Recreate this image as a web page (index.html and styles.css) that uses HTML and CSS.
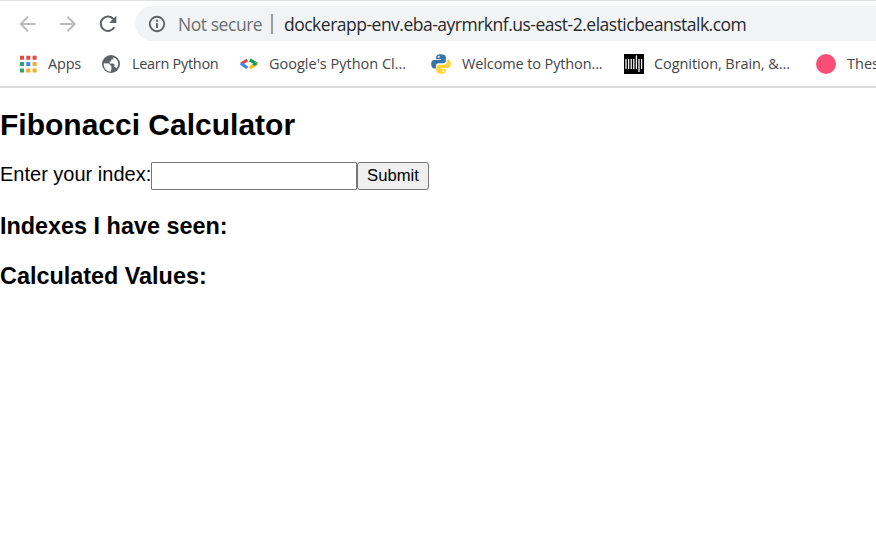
FILE: index.html
```html
<!DOCTYPE html>
<html lang="en">
<head>
<meta charset="utf-8">
<title>Fibonacci Calculator</title>
<link rel="stylesheet" href="styles.css">
</head>
<body>
<header class="browser">
  <div class="toolbar">
    <svg class="nav-icon" viewBox="0 0 20 20"><path class="arrow" d="M17.5 10H3M10 2.8L2.8 10L10 17.2"/></svg>
    <svg class="nav-icon" viewBox="0 0 20 20"><path class="arrow" d="M2 10H16.5M9.5 2.8L16.7 10L9.5 17.2"/></svg>
    <svg class="nav-icon" viewBox="0 0 20 20"><path class="reload" d="M16.3 13.2A7.2 7.2 0 1 1 15.6 5.2"/><path class="reload-tip" d="M18.3 1.8V9H11.1Z"/></svg>
    <div class="address">
      <svg class="info" viewBox="0 0 18 18"><circle cx="9" cy="9" r="7.2"/><path d="M9 8v5M9 4.8v2"/></svg>
      <span class="security">Not secure</span>
      <span class="divider"></span>
      <span class="url">dockerapp-env.eba-ayrmrknf.us-east-2.elasticbeanstalk.com</span>
    </div>
  </div>
  <nav class="bookmarks">
    <a class="bookmark apps">
      <svg viewBox="0 0 20 20"><g fill="#e34a45"><path d="M2 1.8h4v4H2zM8.3 1.8h4v4h-4zM14.6 1.8h4v4h-4z"/></g><path fill="#34a26a" d="M2 8.1h4v4H2zM2 14.4h4v4H2z"/><path fill="#3688ef" d="M8.3 8.1h4v4h-4z"/><path fill="#f4ab27" d="M14.6 8.1h4v4h-4zM8.3 14.4h4v4h-4zM14.6 14.4h4v4h-4z"/></svg>
      <span>Apps</span>
    </a>
    <a class="bookmark learn">
      <svg viewBox="0 0 20 20"><circle cx="10" cy="10" r="9" fill="#5f6368"/><path fill="#fff" d="M2.8 9.2L7.8 9.4L10.4 12.2V14L10 17.6C5.6 17.8 2.2 14 2.8 9.2zM12.2 3.2c3.2 1.2 4.9 3.3 5 6.5-.2 2-.8 3.5-1.8 4.7-.4-1-1-1.4-2-1.5v-2.5l-1-1H8.6V7.5h1.6V5.6h2z"/></svg>
      <span>Learn Python</span>
    </a>
    <a class="bookmark google">
      <svg viewBox="0 0 20 20"><g fill="none" stroke-width="3.2"><path stroke="#e34335" d="M8.3 6L2 10"/><path stroke="#4285f4" d="M1.8 9.2L8.3 14"/><path stroke="#169b58" d="M10.8 6L18 10"/><path stroke="#fbbc05" d="M17.8 9.4L10.8 14"/></g><path fill="#169b58" d="M14.8 8l3.8 2-3.2 2-2-1.5z"/></svg>
      <span>Google's Python Cl...</span>
    </a>
    <a class="bookmark welcome">
      <svg viewBox="0 0 20 20"><path fill="#3774a8" d="M9.8.2C6.3.2 5.2 1.4 5.2 3v2.2h5v.8H3.1C1 6 .2 7.8.2 10.1s.9 4.3 2.7 4.3h2V12c0-1.8 1.3-2.8 3-2.8h4.4c1.5 0 2.5-1 2.5-2.5V3c0-1.8-1.7-2.8-5-2.8z"/><path fill="#ffd43b" d="M10.2 19.8c3.5 0 4.6-1.2 4.6-2.8v-2.2h-5V14h7.1c2.1 0 2.9-1.8 2.9-4.1s-.9-4.3-2.7-4.3h-1.3V8c0 1.8-1.3 2.8-3 2.8H8.2c-1.5 0-2.8 1-2.8 2.5V17c0 1.8 1.5 2.8 4.8 2.8z"/><circle cx="7.7" cy="2.8" r="1" fill="#fff"/><circle cx="12.3" cy="17.2" r="1" fill="#fff"/></svg>
      <span>Welcome to Python...</span>
    </a>
    <a class="bookmark cognition">
      <svg viewBox="0 0 20 20"><path d="M0 0h20v20H0z"/><path stroke="#fff" stroke-width="1.25" d="M2 5v10M4.6 5v10M7.2 5v10M9.8 5v10M12.4 1.5V15M15 5v13M17.6 5v10"/></svg>
      <span>Cognition, Brain, &amp;...</span>
    </a>
    <a class="bookmark thesis">
      <svg viewBox="0 0 20 20"><circle cx="10" cy="10" r="10" fill="#fc4f78"/></svg>
      <span>Thes</span>
    </a>
  </nav>
</header>
<main>
  <h2>Fibonacci Calculator</h2>
  <form class="index-form">
    <label for="index">Enter your index:</label><input id="index" type="text"><button type="button">Submit</button>
  </form>
  <h3>Indexes I have seen:</h3>
  <h3>Calculated Values:</h3>
</main>
</body>
</html>
```
FILE: styles.css
```css
* { box-sizing: border-box; }
body {
  margin: 0;
  overflow: hidden;
  background: #fff;
  color: #000;
  font-family: "Liberation Sans", Arial, sans-serif;
}
.browser {
  height: 88px;
  border-top: 1px solid #dfe1e3;
  border-bottom: 2px solid #dadbdd;
  overflow: hidden;
  font-family: "Open Sans", sans-serif;
}
.toolbar {
  display: flex;
  align-items: center;
  gap: 20px;
  height: 45px;
  padding-left: 18px;
}
.nav-icon { width: 20px; height: 20px; flex: none; }
.arrow { fill: none; stroke: #babcbe; stroke-width: 2; }
.reload { fill: none; stroke: #5f6368; stroke-width: 2.1; }
.reload-tip { fill: #5f6368; }
.address {
  display: flex;
  align-items: center;
  flex: none;
  width: 780px;
  height: 35px;
  margin-left: -3px;
  padding-left: 13px;
  border-radius: 18px 0 0 18px;
  background: #f1f3f4;
  white-space: nowrap;
  font-size: 17.5px;
}
.info { width: 18px; height: 18px; flex: none; margin-right: 12px; }
.info circle, .info path { fill: none; stroke: #5f6368; stroke-width: 1.9; }
.security { width: 93px; flex: none; color: #6b6f73; letter-spacing: -.45px; }
.divider { width: 2px; height: 20px; flex: none; margin-right: 11px; background: #9a9da1; }
.url { color: #27292c; letter-spacing: -.5px; }
.bookmarks {
  display: flex;
  height: 35px;
  padding-left: 18px;
  font-size: 14.5px;
}
.bookmark {
  display: flex;
  align-items: center;
  flex: none;
  gap: 11px;
  color: #424549;
  white-space: nowrap;
}
.bookmark svg { width: 20px; height: 20px; flex: none; }
.apps { width: 83px; gap: 10px; letter-spacing: -.2px; }
.learn { width: 138px; letter-spacing: -.3px; }
.google { width: 192px; gap: 10px; }
.welcome { width: 193px; letter-spacing: -.12px; }
.cognition { width: 192px; gap: 10px; letter-spacing: -.08px; }
h2, h3 { margin: 0; white-space: nowrap; }
h2 { padding-top: 20px; font-size: 30px; line-height: 34px; }
.index-form {
  display: flex;
  height: 28px;
  margin: 20px 0 23px;
  font-size: 20px;
}
label { width: 151px; flex: none; line-height: 24px; white-space: nowrap; }
input { width: 206px; padding: 0 2px; border: 1px solid #767676; border-radius: 1px; background: #fff; }
button {
  width: 72px;
  padding: 0;
  border: 1px solid #767676;
  border-radius: 3px;
  background: #efefef;
  color: #000;
  font: 16.67px "Liberation Sans", Arial, sans-serif;
}
h3 { margin-bottom: 24px; font-size: 23.4px; line-height: 26px; }
```
